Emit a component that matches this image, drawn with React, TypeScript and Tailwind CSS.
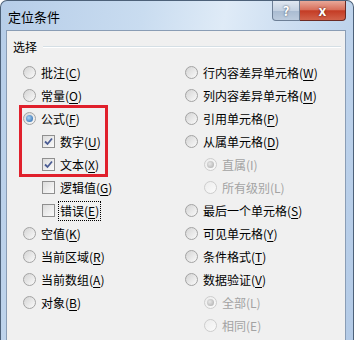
import React from "react";

type Item = {
  label: string;
  key: string;
  kind: "radio" | "check";
  checked?: boolean;
  disabled?: boolean;
  indent?: boolean;
  focus?: boolean;
};

const left: Item[] = [
  { label: "批注", key: "C", kind: "radio" },
  { label: "常量", key: "O", kind: "radio" },
  { label: "公式", key: "F", kind: "radio", checked: true },
  { label: "数字", key: "U", kind: "check", checked: true, indent: true },
  { label: "文本", key: "X", kind: "check", checked: true, indent: true },
  { label: "逻辑值", key: "G", kind: "check", indent: true },
  { label: "错误", key: "E", kind: "check", indent: true, focus: true },
  { label: "空值", key: "K", kind: "radio" },
  { label: "当前区域", key: "R", kind: "radio" },
  { label: "当前数组", key: "A", kind: "radio" },
  { label: "对象", key: "B", kind: "radio" },
];

const right: Item[] = [
  { label: "行内容差异单元格", key: "W", kind: "radio" },
  { label: "列内容差异单元格", key: "M", kind: "radio" },
  { label: "引用单元格", key: "P", kind: "radio" },
  { label: "从属单元格", key: "D", kind: "radio" },
  { label: "直属", key: "I", kind: "radio", checked: true, disabled: true, indent: true },
  { label: "所有级别", key: "L", kind: "radio", disabled: true, indent: true },
  { label: "最后一个单元格", key: "S", kind: "radio" },
  { label: "可见单元格", key: "Y", kind: "radio" },
  { label: "条件格式", key: "T", kind: "radio" },
  { label: "数据验证", key: "V", kind: "radio" },
  { label: "全部", key: "L", kind: "radio", checked: true, disabled: true, indent: true },
  { label: "相同", key: "E", kind: "radio", disabled: true, indent: true },
];

function Radio({ checked, disabled }: { checked?: boolean; disabled?: boolean }) {
  return (
    <span
      className={`flex items-center justify-center w-[13px] h-[13px] rounded-full border shrink-0 ${
        disabled
          ? "border-[#cdcdcd] bg-[linear-gradient(135deg,#ececec,#fbfbfb)]"
          : "border-[#a3a3a3] bg-[linear-gradient(135deg,#d4d4d4,#fafafa)]"
      }`}
    >
      {checked && (
        <span
          className={`w-[7px] h-[7px] rounded-full ${
            disabled
              ? "bg-[radial-gradient(circle_at_40%_40%,#e8e8e8,#a8a8a8)]"
              : "bg-[radial-gradient(circle_at_40%_40%,#a9d4f5,#1f5fa8)]"
          }`}
        />
      )}
    </span>
  );
}

function Check({ checked }: { checked?: boolean }) {
  return (
    <span className="flex items-center justify-center w-[13px] h-[13px] border border-[#8f8f8f] bg-[linear-gradient(135deg,#dcdcdc,#fbfbfb)] shrink-0">
      {checked && (
        <svg width="9" height="9" viewBox="0 0 9 9">
          <path d="M1 4.5 L3.5 7 L8 1.5" fill="none" stroke="#4b5d94" strokeWidth="1.8" />
        </svg>
      )}
    </span>
  );
}

function Row({ item }: { item: Item }) {
  const text = (
    <span className={item.disabled ? "text-[#a3a3a3]" : "text-black"}>
      {item.label}(<span className={item.disabled ? "" : "underline underline-offset-2"}>{item.key}</span>)
    </span>
  );
  return (
    <div className={`flex items-center h-[23px] ${item.indent ? "pl-[19px]" : ""}`}>
      {item.kind === "radio" ? (
        <Radio checked={item.checked} disabled={item.disabled} />
      ) : (
        <Check checked={item.checked} />
      )}
      <span className={`ml-[4px] px-[1px] ${item.focus ? "outline-1 outline-dotted outline-black" : ""}`}>{text}</span>
    </div>
  );
}

export default function App() {
  return (
    <div
      className="relative w-[354px] h-[340px] flex flex-col overflow-hidden rounded-t-[7px] border border-[#4d6179] border-b-0 bg-[linear-gradient(100deg,#b6cde8_0%,#c9dcf0_35%,#dfebf7_55%,#c3d7ee_80%,#b3cae6_100%)] text-[12px]"
      style={{ fontFamily: '"Noto Sans CJK SC", "Noto Sans", sans-serif' }}
    >
      {/* Title bar */}
      <div className="flex h-[29px] shrink-0">
        <span className="pl-[7px] pt-[6px] text-[13px] text-black">定位条件</span>
        <div className="ml-auto mr-[7px] flex h-[20px]">
          <div className="w-[28px] flex items-center justify-center rounded-bl-[4px] border border-t-0 border-[#6d7f96] bg-[linear-gradient(180deg,#dfe7f1_0%,#c4d1e1_50%,#a9bbd1_51%,#bccbdd_100%)] text-white font-bold text-[13px] [text-shadow:0_0_2px_#2b3a4f]">
            ?
          </div>
          <div className="w-[46px] flex items-center justify-center rounded-br-[4px] border border-t-0 border-l-0 border-[#6b2a24] bg-[linear-gradient(180deg,#e8a899_0%,#d8705c_45%,#c43c25_52%,#d2624a_100%)] text-white font-bold text-[14px] [text-shadow:0_0_2px_#4a1008]">
            x
          </div>
        </div>
      </div>

      {/* Client area */}
      <div className="flex-1 ml-[5px] mr-[7px] border border-[#8a9db5] border-b-0 bg-[#f0f0f0] flex flex-col">
        <div className="flex items-center h-[30px] pt-[2px] pl-[6px] pr-[4px]">
          <span className="text-black">选择</span>
          <span className="flex-1 ml-[6px] h-[2px] border-t border-[#d5dfe5] border-b border-b-white" />
        </div>
        <div className="flex pt-[0px]">
          <div className="w-[178px] pl-[16px] flex flex-col">
            {left.map((it, i) => (
              <Row key={i} item={it} />
            ))}
          </div>
          <div className="flex flex-col">
            {right.map((it, i) => (
              <Row key={i} item={it} />
            ))}
          </div>
        </div>
      </div>

      {/* red annotation box */}
      <div className="absolute left-[18px] top-[104px] w-[89px] h-[72px] border-[3px] border-[#e0202c]" />
    </div>
  );
}
